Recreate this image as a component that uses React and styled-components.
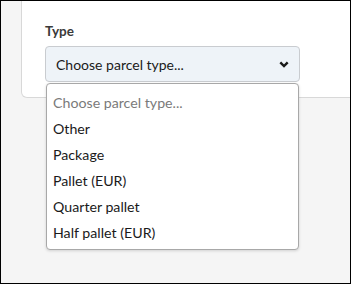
import React from 'react';
import styled, { createGlobalStyle } from 'styled-components';

const options = [
  'Other',
  'Package',
  'Pallet (EUR)',
  'Quarter pallet',
  'Half pallet (EUR)',
];

const App = () => (
  <>
    <GlobalStyle />
    <Frame>
      <Card>
        <Field>
          <Label>Type</Label>
          <Select>
            <SelectText>Choose parcel type...</SelectText>
            <Chevron viewBox="0 0 10 7" width="10" height="7">
              <polyline
                points="1.3,1.3 5,5 8.7,1.3"
                fill="none"
                stroke="#1a1a1a"
                strokeWidth="2.4"
              />
            </Chevron>
          </Select>
          <Menu>
            <Option placeholder>Choose parcel type...</Option>
            {options.map((o) => (
              <Option key={o}>{o}</Option>
            ))}
          </Menu>
        </Field>
      </Card>
    </Frame>
  </>
);

export default App;

const GlobalStyle = createGlobalStyle`
  html, body {
    margin: 0;
    padding: 0;
  }
  body {
    font-family: Lato, "Open Sans", sans-serif;
  }
`;

const Frame = styled.div`
  box-sizing: border-box;
  width: 351px;
  height: 284px;
  border: 1px solid #000;
  background: #f5f5f5;
  overflow: hidden;
  padding-left: 20px;
`;

const Card = styled.div`
  box-sizing: border-box;
  height: 97px;
  margin-right: -20px;
  background: #fff;
  border: 1px solid #d8d8d8;
  border-top: none;
  border-radius: 0 0 0 6px;
  padding: 22px 0 0 23px;
`;

const Field = styled.div`
  position: relative;
  width: 255px;
`;

const Label = styled.div`
  font-size: 13.5px;
  font-weight: 700;
  color: #3a3a3a;
  line-height: 17px;
  margin-bottom: 6px;
`;

const Select = styled.div`
  box-sizing: border-box;
  height: 36px;
  display: flex;
  align-items: center;
  justify-content: space-between;
  padding: 0 10px 0 10px;
  background: #eef3f8;
  border: 1px solid #c9ccd0;
  border-radius: 4px;
`;

const SelectText = styled.span`
  font-size: 14px;
  color: #1a1a1a;
`;

const Chevron = styled.svg`
  display: block;
`;

const Menu = styled.div`
  position: absolute;
  top: 60px;
  left: 1px;
  width: 253px;
  box-sizing: border-box;
  background: #fff;
  border: 1px solid #a8a8a8;
  border-radius: 4px;
  box-shadow: 0 1px 3px rgba(0, 0, 0, 0.15);
  padding: 6px 0 3px;
`;

const Option = styled.div`
  font-size: 14.2px;
  line-height: 26px;
  padding-left: 6px;
  color: ${({ placeholder }) => (placeholder ? '#7a7a7a' : '#1a1a1a')};
`;
